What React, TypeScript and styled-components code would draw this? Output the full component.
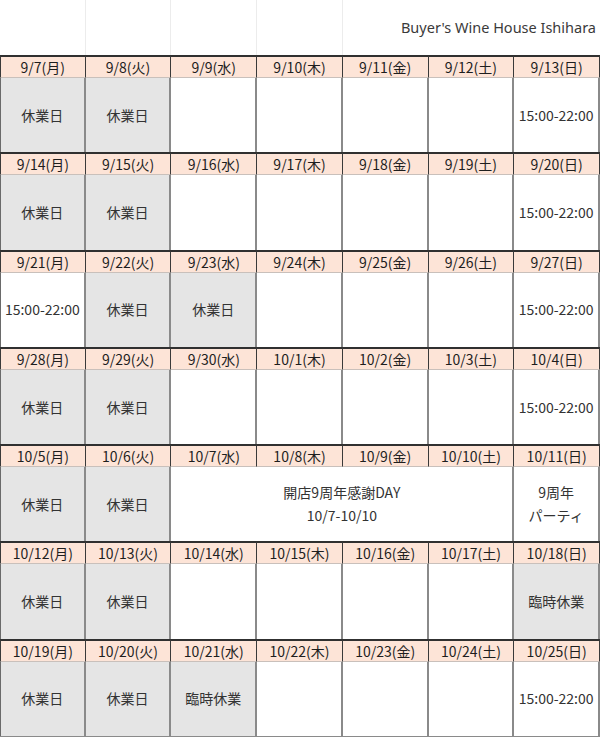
import styled, { createGlobalStyle } from "styled-components";

const GlobalStyle = createGlobalStyle`
    body {
        margin: 0;
        background: #ffffff;
        font-family: "Noto Sans CJK JP", "Noto Sans", sans-serif;
    }
`

const Sheet = styled.div`
    width: 600px;
    display: grid;
    grid-template-columns: repeat(7, 1fr);
    color: #333333;
`

const TopCell = styled.div <{Last?: boolean}>`
    height: 55px;
    border-right: 1px solid #ececec;
    box-sizing: border-box;
`

const Title = styled.div`
    grid-column: 5 / span 3;
    height: 55px;
    display: flex;
    align-items: center;
    justify-content: flex-end;
    padding-right: 4px;
    padding-bottom: 2px;
    box-sizing: border-box;
    font-family: "Noto Sans", sans-serif;
    font-size: 14.5px;
    color: #3a3a3a;
`

const DateCell = styled.div <{First?: boolean}>`
    height: 23px;
    box-sizing: border-box;
    background: #fde4d7;
    border-top: 2px solid #303030;
    border-bottom: 1px solid #c9c0bb;
    border-right: 1px solid #3a3a3a;
    border-left: ${props => props.First ? "1px solid #3a3a3a" : "none"};
    display: flex;
    align-items: center;
    justify-content: center;
    font-size: 14px;
    color: #1e1e1e;
    line-height: 1;
`

const BodyCell = styled.div <{Grey?: boolean, Span?: number, First?: boolean}>`
    grid-column: span ${props => props.Span ?? 1};
    height: 74.3px;
    box-sizing: border-box;
    background: ${props => props.Grey ? "#e5e5e5" : "#ffffff"};
    border-right: 2px solid #8a8a8a;
    border-left: ${props => props.First ? "1px solid #6a6a6a" : "none"};
    display: flex;
    flex-direction: column;
    align-items: center;
    justify-content: center;
    gap: 4px;
    font-size: 14px;
    line-height: 19px;
    color: #333333;
    text-align: center;
`

const BottomLine = styled.div`
    grid-column: 1 / span 7;
    height: 1px;
    background: #8a8a8a;
`

type Day = { text?: string[], grey?: boolean, span?: number }
type Week = { dates: string[], days: Day[] }

const OFF: Day = { text: ["休業日"], grey: true }
const OPEN: Day = { text: ["15:00-22:00"] }
const EMPTY: Day = {}
const TEMP: Day = { text: ["臨時休業"], grey: true }

const WD = ["月", "火", "水", "木", "金", "土", "日"]

const dates = (m: number[], d: number[]) => d.map((day, i) => `${m[i]}/${day}(${WD[i]})`)

const WEEKS: Week[] = [
    { dates: dates([9, 9, 9, 9, 9, 9, 9], [7, 8, 9, 10, 11, 12, 13]), days: [OFF, OFF, EMPTY, EMPTY, EMPTY, EMPTY, OPEN] },
    { dates: dates([9, 9, 9, 9, 9, 9, 9], [14, 15, 16, 17, 18, 19, 20]), days: [OFF, OFF, EMPTY, EMPTY, EMPTY, EMPTY, OPEN] },
    { dates: dates([9, 9, 9, 9, 9, 9, 9], [21, 22, 23, 24, 25, 26, 27]), days: [OPEN, OFF, OFF, EMPTY, EMPTY, EMPTY, OPEN] },
    { dates: dates([9, 9, 9, 10, 10, 10, 10], [28, 29, 30, 1, 2, 3, 4]), days: [OFF, OFF, EMPTY, EMPTY, EMPTY, EMPTY, OPEN] },
    {
        dates: dates([10, 10, 10, 10, 10, 10, 10], [5, 6, 7, 8, 9, 10, 11]),
        days: [OFF, OFF, { text: ["開店9周年感謝DAY", "10/7-10/10"], span: 4 }, { text: ["9周年", "パーティ"] }]
    },
    { dates: dates([10, 10, 10, 10, 10, 10, 10], [12, 13, 14, 15, 16, 17, 18]), days: [OFF, OFF, EMPTY, EMPTY, EMPTY, EMPTY, TEMP] },
    { dates: dates([10, 10, 10, 10, 10, 10, 10], [19, 20, 21, 22, 23, 24, 25]), days: [OFF, OFF, TEMP, EMPTY, EMPTY, EMPTY, OPEN] },
]

export default function App() {
    return (
        <>
            <GlobalStyle />
            <Sheet>
                {[0, 1, 2, 3].map((i) => <TopCell key={i} />)}
                <Title>Buyer's Wine House Ishihara</Title>
                {WEEKS.map((week, w) => (
                    <>
                        {week.dates.map((d, i) => <DateCell key={`d${w}-${i}`} First={i == 0}>{d}</DateCell>)}
                        {week.days.map((day, i) => (
                            <BodyCell key={`b${w}-${i}`} Grey={day.grey} Span={day.span} First={i == 0}>
                                {day.text?.map((t) => <span key={t}>{t}</span>)}
                            </BodyCell>
                        ))}
                    </>
                ))}
                <BottomLine />
            </Sheet>
        </>
    )
}
